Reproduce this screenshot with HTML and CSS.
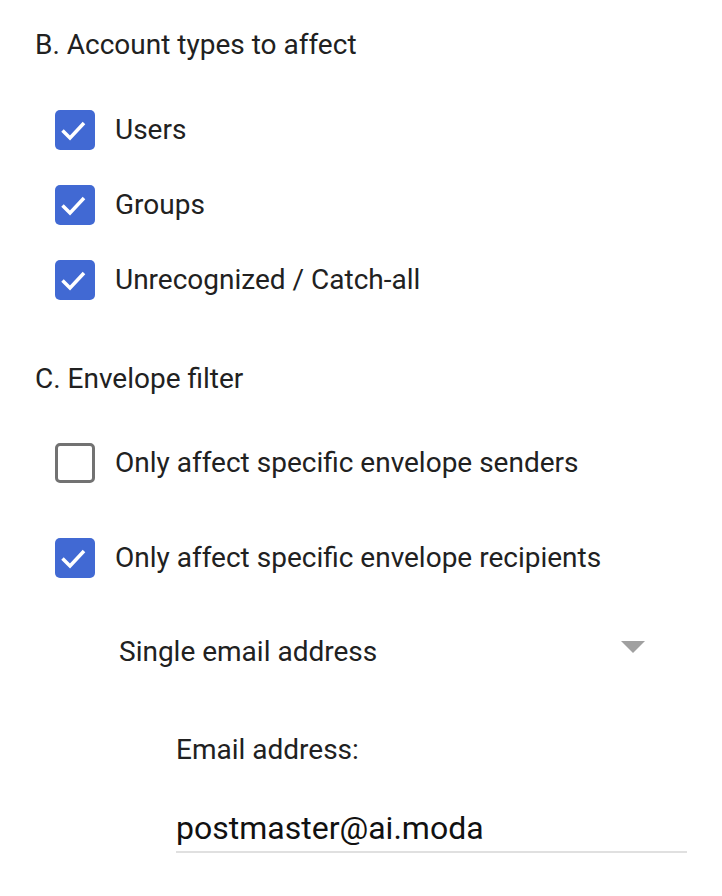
FILE: index.html
```html
<!DOCTYPE html>
<html>
<head>
<meta charset="utf-8">
<link rel="stylesheet" href="styles.css">
</head>
<body>
<div class="page">
  <section class="section section-b">
    <h2 class="heading">B. Account types to affect</h2>
    <div class="options">
      <label class="option">
        <span class="box checked"><svg viewBox="0 0 40 40"><path d="M7.5 20.5 L15 28 L29 13" /></svg></span>
        <span class="label">Users</span>
      </label>
      <label class="option">
        <span class="box checked"><svg viewBox="0 0 40 40"><path d="M7.5 20.5 L15 28 L29 13" /></svg></span>
        <span class="label">Groups</span>
      </label>
      <label class="option">
        <span class="box checked"><svg viewBox="0 0 40 40"><path d="M7.5 20.5 L15 28 L29 13" /></svg></span>
        <span class="label">Unrecognized / Catch-all</span>
      </label>
    </div>
  </section>
  <section class="section section-c">
    <h2 class="heading">C. Envelope filter</h2>
    <div class="options options-c">
      <label class="option">
        <span class="box"></span>
        <span class="label">Only affect specific envelope senders</span>
      </label>
      <label class="option">
        <span class="box checked"><svg viewBox="0 0 40 40"><path d="M7.5 20.5 L15 28 L29 13" /></svg></span>
        <span class="label">Only affect specific envelope recipients</span>
      </label>
    </div>
    <div class="select">
      <span class="select-text">Single email address</span>
      <span class="caret"></span>
    </div>
    <div class="field">
      <div class="field-label">Email address:</div>
      <div class="field-input">postmaster@ai.moda</div>
    </div>
  </section>
</div>
</body>
</html>
```

FILE: styles.css
```css
html, body {
  margin: 0;
  padding: 0;
  background: #ffffff;
}
body {
  font-family: Roboto, "Noto Sans", sans-serif;
  color: #212121;
}
.page {
  padding: 25px 0 0 35px;
}
.heading {
  margin: 0;
  font-size: 28px;
  font-weight: 400;
  line-height: 40px;
  color: #212121;
}
.options {
  display: flex;
  flex-direction: column;
  gap: 35px;
  margin: 45px 0 0 20px;
}
.options-c {
  margin-top: 44px;
  gap: 55px;
}
.section-c {
  margin-top: 59px;
}
.option {
  display: flex;
  align-items: center;
  gap: 20px;
  height: 40px;
}
.box {
  width: 40px;
  height: 40px;
  box-sizing: border-box;
  border: 3px solid #727272;
  border-radius: 5px;
  flex: none;
  display: flex;
}
.box.checked {
  border: none;
  background: #4169d3;
}
.box svg {
  width: 40px;
  height: 40px;
}
.box path {
  fill: none;
  stroke: #ffffff;
  stroke-width: 3.5;
}
.label {
  font-size: 28px;
  line-height: 40px;
}
.select {
  display: flex;
  align-items: center;
  justify-content: space-between;
  width: 526px;
  height: 40px;
  margin: 54px 0 0 84px;
}
.select-text {
  font-size: 28px;
  line-height: 40px;
}
.caret {
  width: 0;
  height: 0;
  border-left: 12px solid transparent;
  border-right: 12px solid transparent;
  border-top: 12px solid #a0a0a0;
  margin-bottom: 10px;
}
.field {
  margin: 58px 0 0 141px;
  width: 511px;
}
.field-label {
  font-size: 28px;
  line-height: 40px;
}
.field-input {
  margin-top: 38px;
  font-size: 32px;
  line-height: 40px;
  color: #111111;
  padding-bottom: 3px;
  border-bottom: 2px solid #e0e0e0;
}
```
